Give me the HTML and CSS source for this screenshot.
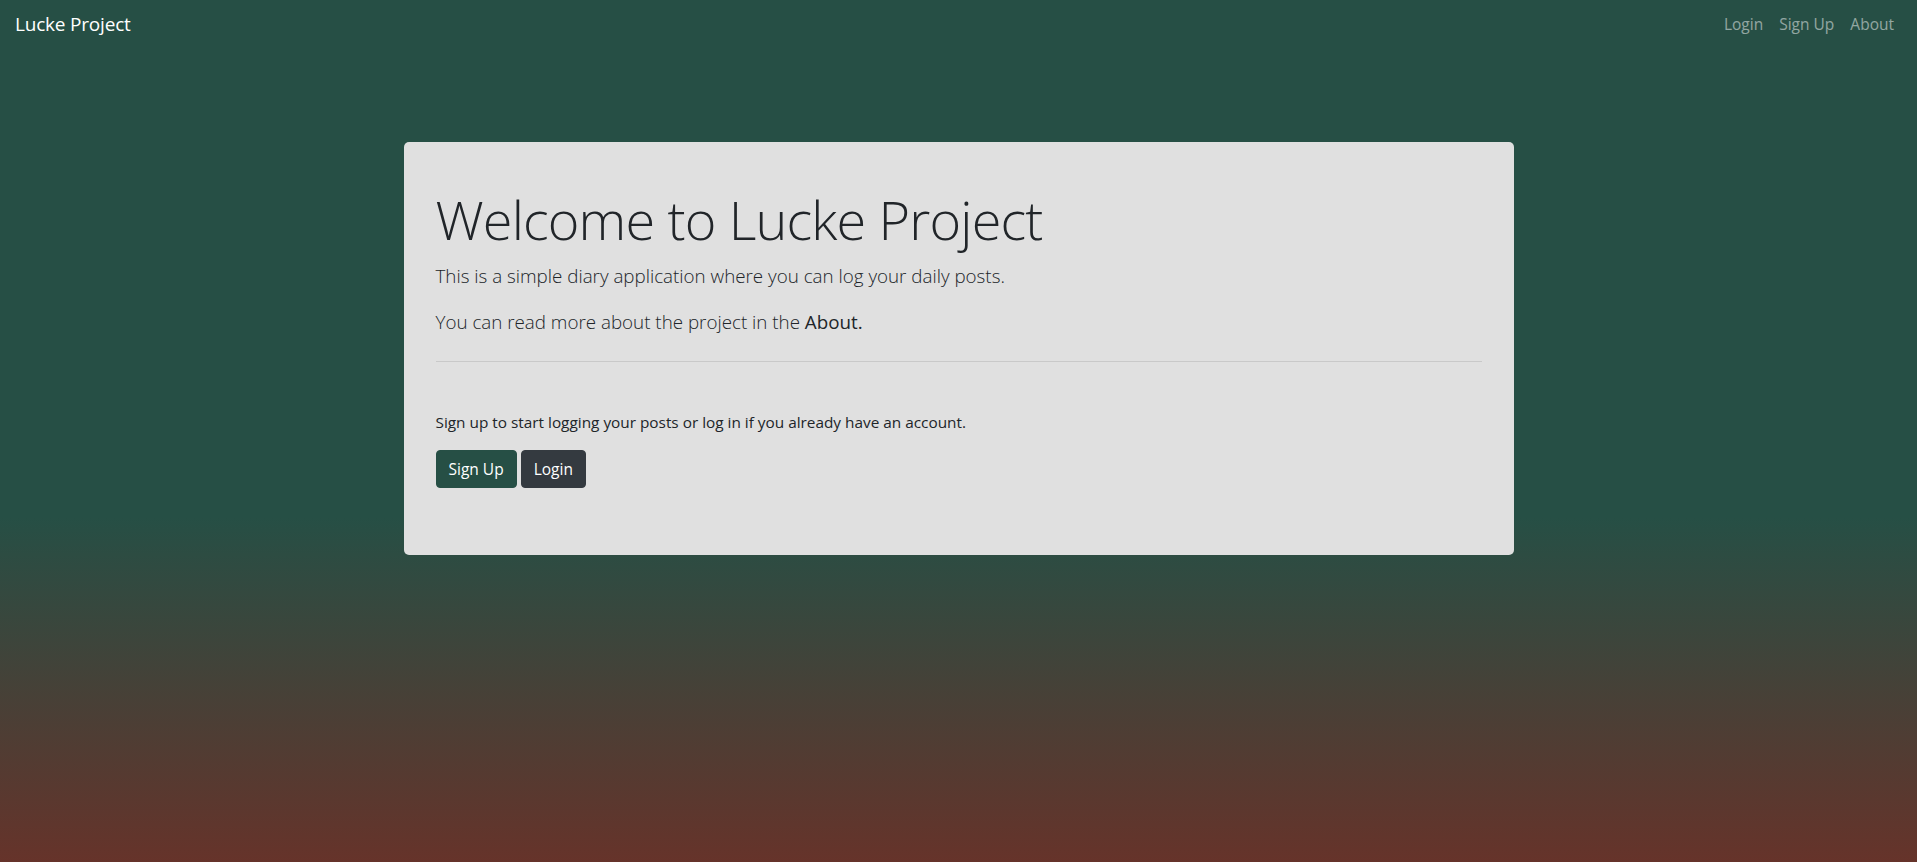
FILE: index.html
```html
<!DOCTYPE html>
<html lang="en">
<head>
<meta charset="utf-8">
<title>Lucke Project</title>
<link rel="stylesheet" href="styles.css">
</head>
<body>
<nav class="navbar">
  <a class="brand" href="#">Lucke Project</a>
  <ul class="nav">
    <li><a class="nav-link" href="#">Login</a></li>
    <li><a class="nav-link" href="#">Sign Up</a></li>
    <li><a class="nav-link" href="#">About</a></li>
  </ul>
</nav>
<main class="container">
  <section class="jumbotron">
    <h1 class="display">Welcome to Lucke Project</h1>
    <p class="lead">This is a simple diary application where you can log your daily posts.</p>
    <p class="lead">You can read more about the project in the <a class="about-link" href="#">About.</a></p>
    <hr class="divider">
    <p class="note">Sign up to start logging your posts or log in if you already have an account.</p>
    <div class="actions">
      <a class="btn btn-green" href="#">Sign Up</a>
      <a class="btn btn-dark" href="#">Login</a>
    </div>
  </section>
</main>
</body>
</html>
```
FILE: styles.css
```css
html, body {
  margin: 0;
  padding: 0;
}
body {
  min-height: 862px;
  font-family: "Open Sans", "Noto Sans", "Liberation Sans", sans-serif;
  font-size: 16px;
  line-height: 1.5;
  color: #212529;
  background: linear-gradient(to bottom, #264f45 0%, #264f45 60%, #66332a 100%);
  background-attachment: fixed;
}
a { text-decoration: none; }

.navbar {
  display: flex;
  align-items: center;
  justify-content: space-between;
  height: 52px;
  padding: 0 15px 0 15px;
}
.brand {
  color: #fff;
  font-size: 19px;
  line-height: 30px;
  letter-spacing: -0.2px;
  margin-top: -4px;
}
.nav {
  display: flex;
  list-style: none;
  margin: -4px 0 0 0;
  padding: 0;
}
.nav-link {
  display: block;
  padding: 0 8px;
  color: rgba(255, 255, 255, 0.5);
  font-size: 15.5px;
  line-height: 24px;
}

.container {
  width: 1110px;
  margin: 0 auto;
  padding-top: 90px;
}
.jumbotron {
  background: #e0e0e0;
  border-radius: 5px;
  padding: 44px 32px 67px 32px;
}
.display {
  margin: 0 0 8px 0;
  font-size: 54px;
  font-weight: 300;
  line-height: 67px;
  letter-spacing: -0.85px;
}
.lead {
  margin: 0 0 16px 0;
  font-size: 18.8px;
  font-weight: 300;
  line-height: 30px;
}
.about-link {
  color: #212529;
  font-weight: 400;
}
.divider {
  margin: 24px 0 48px 0;
  border: 0;
  border-top: 1px solid rgba(0, 0, 0, 0.1);
}
.note {
  margin: 0 0 16px 0;
  font-size: 15.35px;
  line-height: 24px;
}
.actions {
  display: flex;
  gap: 4px;
}
.btn {
  display: inline-block;
  padding: 6px 12px;
  border: 1px solid transparent;
  border-radius: 4px;
  color: #fff;
  font-size: 15.5px;
  line-height: 24px;
}
.btn-green {
  background: #264f45;
  border-color: #264f45;
}
.btn-dark {
  background: #343a40;
  border-color: #343a40;
}
```
